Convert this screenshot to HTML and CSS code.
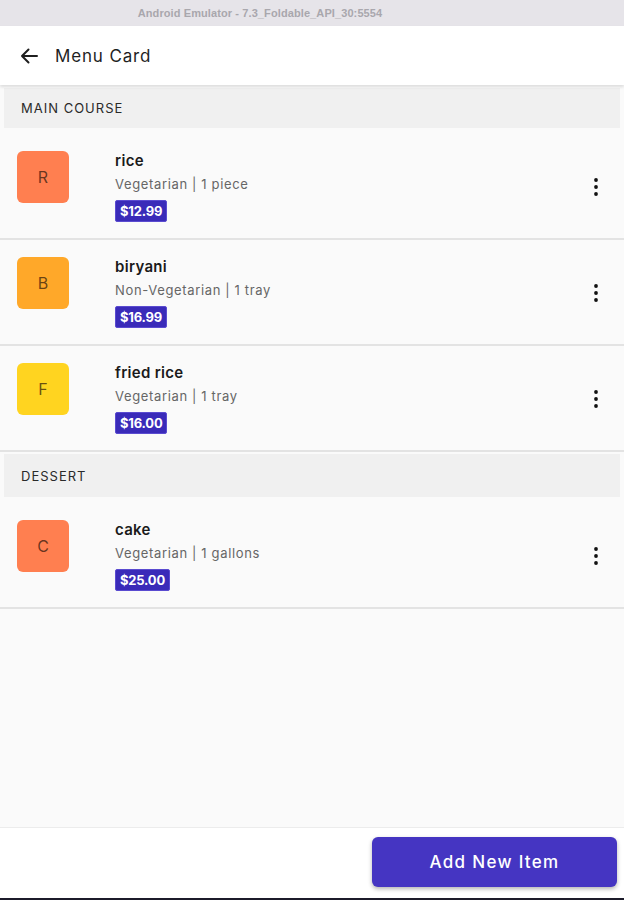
FILE: index.html
```html
<!DOCTYPE html>
<html>
<head>
<meta charset="utf-8">
<link rel="stylesheet" href="styles.css">
</head>
<body>
<div class="window">
  <div class="titlebar">Android Emulator - 7.3_Foldable_API_30:5554</div>
  <header class="appbar">
    <svg class="back" width="20" height="20" viewBox="0 0 20 20"><path d="M18 10H3M9.5 3.5L3 10l6.5 6.5" fill="none" stroke="#1f1f1f" stroke-width="2" stroke-linecap="round" stroke-linejoin="round"/></svg>
    <span class="apptitle">Menu Card</span>
  </header>
  <main class="content">
    <div class="section-head">MAIN COURSE</div>
    <div class="items">
      <div class="row">
        <div class="avatar coral">R</div>
        <div class="info">
          <div class="name">rice</div>
          <div class="meta">Vegetarian | 1 piece</div>
          <span class="price">$12.99</span>
        </div>
        <svg class="kebab" width="8" height="20" viewBox="0 0 8 20"><circle cx="4" cy="3" r="1.9"/><circle cx="4" cy="10" r="1.9"/><circle cx="4" cy="17" r="1.9"/></svg>
      </div>
      <div class="row">
        <div class="avatar orange">B</div>
        <div class="info">
          <div class="name">biryani</div>
          <div class="meta">Non-Vegetarian | 1 tray</div>
          <span class="price">$16.99</span>
        </div>
        <svg class="kebab" width="8" height="20" viewBox="0 0 8 20"><circle cx="4" cy="3" r="1.9"/><circle cx="4" cy="10" r="1.9"/><circle cx="4" cy="17" r="1.9"/></svg>
      </div>
      <div class="row">
        <div class="avatar yellow">F</div>
        <div class="info">
          <div class="name">fried rice</div>
          <div class="meta">Vegetarian | 1 tray</div>
          <span class="price">$16.00</span>
        </div>
        <svg class="kebab" width="8" height="20" viewBox="0 0 8 20"><circle cx="4" cy="3" r="1.9"/><circle cx="4" cy="10" r="1.9"/><circle cx="4" cy="17" r="1.9"/></svg>
      </div>
    </div>
    <div class="section-head">DESSERT</div>
    <div class="items">
      <div class="row">
        <div class="avatar coral">C</div>
        <div class="info">
          <div class="name">cake</div>
          <div class="meta">Vegetarian | 1 gallons</div>
          <span class="price">$25.00</span>
        </div>
        <svg class="kebab" width="8" height="20" viewBox="0 0 8 20"><circle cx="4" cy="3" r="1.9"/><circle cx="4" cy="10" r="1.9"/><circle cx="4" cy="17" r="1.9"/></svg>
      </div>
    </div>
  </main>
  <footer class="bottombar">
    <button class="add">Add New Item</button>
  </footer>
</div>
</body>
</html>
```
FILE: styles.css
```css
* { box-sizing: border-box; }
html, body { margin: 0; padding: 0; }
body {
  width: 624px;
  height: 900px;
  font-family: Inter, "Open Sans", sans-serif;
  background: #fafafa;
  overflow: hidden;
}
.window {
  height: 900px;
  display: flex;
  flex-direction: column;
  border-bottom: 2px solid #1c1b2a;
}
.titlebar {
  height: 26px;
  flex: none;
  background: #e6e4e9;
  color: #a9a7ad;
  font-family: "Liberation Sans", Arial, sans-serif;
  font-weight: bold;
  font-size: 11px;
  letter-spacing: 0.1px;
  display: flex;
  align-items: center;
  justify-content: center;
  padding-right: 104px;
}
.appbar {
  height: 59px;
  flex: none;
  background: #fff;
  display: flex;
  align-items: center;
  padding-left: 19px;
  box-shadow: 0 2px 3px rgba(0,0,0,0.12);
  position: relative;
  z-index: 1;
}
.back { margin-right: 16px; }
.apptitle {
  font-size: 17px;
  color: #1f1f1f;
  letter-spacing: 0.85px;
}
.content {
  flex: 1;
  background: #fafafa;
  padding-top: 3px;
}
.section-head {
  margin: 0 4px;
  height: 40px;
  background: #f0f0f0;
  display: flex;
  align-items: center;
  padding-left: 17px;
  font-size: 13px;
  color: #2a2a2a;
  letter-spacing: 1px;
}
.section-head + .items + .section-head { height: 43px; margin-top: 2px; }
.items { padding-top: 5px; }
.items .row:first-child { margin-top: -5px; padding-top: 23px; }
.row {
  display: flex;
  align-items: flex-start;
  padding: 17px 16px 16px 17px;
  border-bottom: 2px solid #e3e3e3;
}
.avatar {
  width: 52px;
  height: 52px;
  border-radius: 6px;
  flex: none;
  display: flex;
  align-items: center;
  justify-content: center;
  font-size: 16px;
  color: rgba(40,20,10,0.7);
}
.coral { background: #ff7f50; }
.orange { background: #ffa829; }
.yellow { background: #ffd420; }
.info {
  margin-left: 46px;
  flex: 1;
  display: flex;
  flex-direction: column;
  align-items: flex-start;
}
.name {
  font-size: 15px;
  font-weight: 600;
  line-height: 20px;
  color: #1a1a1a;
  letter-spacing: 0.3px;
}
.meta {
  font-size: 13px;
  line-height: 20px;
  margin-top: 3px;
  color: #666;
  letter-spacing: 0.65px;
}
.price {
  margin-top: 6px;
  height: 22px;
  padding: 0 4px;
  display: inline-flex;
  align-items: center;
  background: #3a2bb9;
  border: 1px solid #5a4bd0;
  border-radius: 2px;
  color: #fff;
  font-weight: 700;
  font-size: 13px;
  letter-spacing: -0.2px;
}
.kebab {
  align-self: center;
  flex: none;
  margin-right: 8px;
  fill: #111;
}
.bottombar {
  height: 71px;
  flex: none;
  background: #fff;
  border-top: 1px solid #ececec;
  display: flex;
  justify-content: flex-end;
  align-items: flex-start;
  padding: 9px 7px 0 0;
}
.add {
  width: 245px;
  height: 50px;
  border: none;
  border-radius: 6px;
  background: #4535c2;
  color: #fff;
  font-family: Inter, "Open Sans", sans-serif;
  font-size: 17px;
  font-weight: 500;
  letter-spacing: 1.3px;
  box-shadow: 0 2px 4px rgba(0,0,0,0.3);
}
```
